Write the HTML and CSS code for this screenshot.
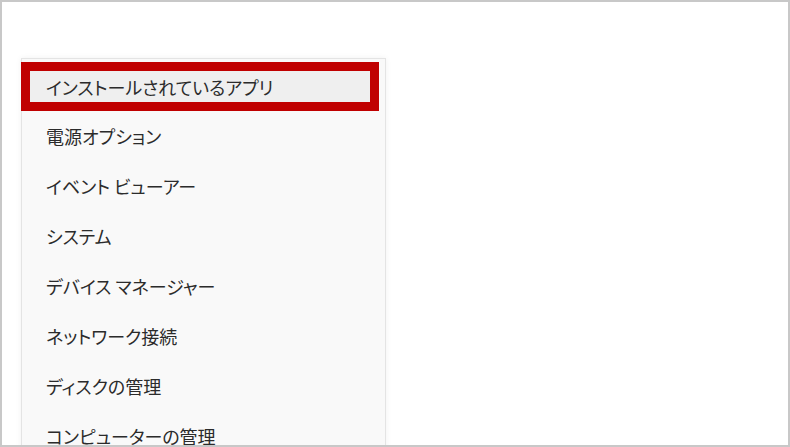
FILE: index.html
```html
<!DOCTYPE html>
<html lang="ja">
<head>
    <meta charset="UTF-8">
    <meta name="viewport" content="width=device-width, initial-scale=1.0">
    <title>クイックリンク メニュー</title>
    <link rel="stylesheet" href="styles.css">
</head>
<body>
    <div class="frame">
        <!-- 右クリックメニュー -->
        <ul class="menu">
            <li class="menu-item selected">インストールされているアプリ</li>
            <li class="menu-item">電源オプション</li>
            <li class="menu-item">イベント ビューアー</li>
            <li class="menu-item">システム</li>
            <li class="menu-item">デバイス マネージャー</li>
            <li class="menu-item">ネットワーク接続</li>
            <li class="menu-item">ディスクの管理</li>
            <li class="menu-item">コンピューターの管理</li>
        </ul>
    </div>
</body>
</html>
```

FILE: styles.css
```css
body {
    margin: 0;
    padding: 0;
    background: #ffffff;
    font-family: "Noto Sans CJK JP", "Noto Sans", sans-serif;
    color: #2b2b2b;
}

.frame {
    width: 790px;
    height: 447px;
    box-sizing: border-box;
    border: 2px solid #c8c8c8;
    overflow: hidden;
    padding: 56px 0 0 19px;
    background: #ffffff;
}

.menu {
    list-style: none;
    margin: 0;
    padding: 3px 0 0 0;
    width: 363px;
    background: #f9f9f9;
    border: 1px solid #e4e4e4;
    border-bottom: none;
    box-shadow: 0 0 6px rgba(0, 0, 0, 0.06);
}

.menu-item {
    height: 50px;
    display: flex;
    align-items: center;
    padding-left: 24px;
    font-size: 18px;
    font-feature-settings: "palt";
    box-sizing: border-box;
    white-space: nowrap;
}

.menu-item.selected {
    height: 49px;
    margin-left: -1px;
    width: 358px;
    padding-left: 16px;
    border: 9px solid #c00000;
    background: #efefef;
}
```
